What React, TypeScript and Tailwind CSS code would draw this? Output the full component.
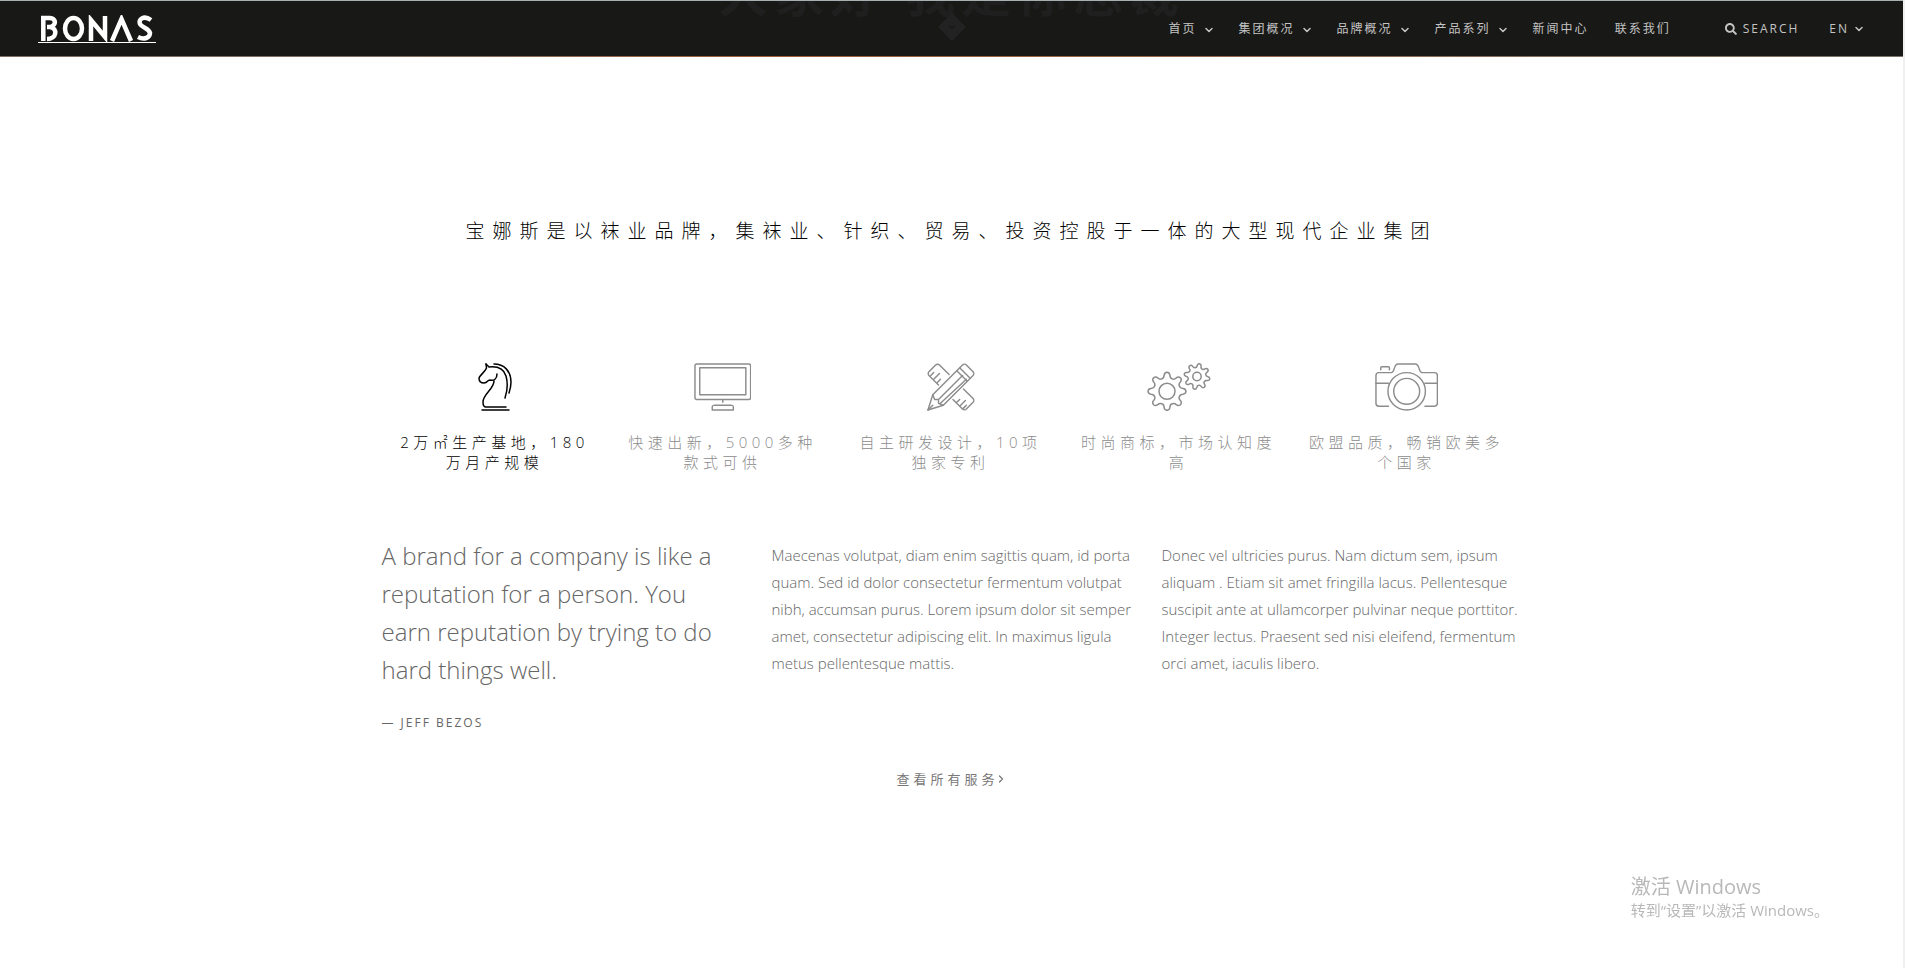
import { ChevronDown, ChevronRight } from 'lucide-react';
import { FaSearch } from 'react-icons/fa';

const fontCls = "font-['Open_Sans','Noto_Sans_CJK_SC',sans-serif]";

const menu = [
  { label: '首页', sub: true },
  { label: '集团概况', sub: true },
  { label: '品牌概况', sub: true },
  { label: '产品系列', sub: true },
  { label: '新闻中心', sub: false },
  { label: '联系我们', sub: false },
];

const iconProps = {
  className: 'h-12 w-auto',
  fill: 'none',
  stroke: 'currentColor',
  strokeWidth: 1.5,
  strokeLinecap: 'round' as const,
  strokeLinejoin: 'round' as const,
};

function KnightIcon() {
  return (
    <svg {...iconProps} viewBox="0 0 34 48">
      <path d="M8 1l.5 4C7 9 2 12 1 15c0 3 1 5 5 5 4 0 3-3 6-3 4 1 7-1 7-6" />
      <path d="M8 1l3 3c10-1 15 2 17 9 2 7 1 16-1 22" />
      <path d="M16 1c10 0 17 7 17 18 0 5-1 8-2 11" />
      <path d="M16 18c0 8-11 13-11 21 0 3 1 5 3 5h20M4 47h27" />
    </svg>
  );
}

function MonitorIcon() {
  return (
    <svg {...iconProps} viewBox="0 0 60 50">
      <rect x="1" y="1" width="58" height="37" rx="2" />
      <rect x="6" y="5" width="48" height="28" />
      <path d="M30 38v3M19 49v-3c0-2 1-2 3-2h16c2 0 3 0 3 2v3z" />
    </svg>
  );
}

function ToolsIcon() {
  return (
    <svg {...iconProps} viewBox="0 0 50 50">
      <path d="M1 49l5-16L37 2c1-1 3-1 4 0l7 7c1 1 1 3 0 4L17 44z" />
      <path d="M31 8l11 11M34 5l11 11M6 33l2 5h4v4l5 2M12 38L37 13M14 42L41 17M1 49l5-5" />
      <path d="M12 23L2 13c-1-1-1-3 0-4l7-7c1-1 3-1 4 0l10 10M4 13l3-3M7 17l6-6M11 20l3-3" />
      <path d="M38 27l10 10c1 1 1 3 0 4l-7 7c-1 1-3 1-4 0L27 38M31 41l3-3M34 45l6-6M38 47l3-3" />
    </svg>
  );
}

// cog outline with eight rounded teeth
function cog(cx: number, cy: number, outer: number, inner: number, turn: number) {
  const at = (a: number, r: number) => `${(cx + r * Math.cos(a)).toFixed(2)} ${(cy + r * Math.sin(a)).toFixed(2)}`;
  const mid = (outer + inner) / 2;
  let d = `M${at(turn - Math.PI / 8, inner)}`;
  for (let i = 0; i < 8; i++) {
    const a = turn + (i * Math.PI) / 4;
    d += `Q${at(a - 0.22, inner)} ${at(a - 0.18, mid)}`;
    d += `Q${at(a - 0.14, outer)} ${at(a, outer)}`;
    d += `Q${at(a + 0.14, outer)} ${at(a + 0.18, mid)}`;
    d += `Q${at(a + 0.22, inner)} ${at(a + Math.PI / 8, inner)}`;
  }
  return `${d}Z`;
}

function CogsIcon() {
  return (
    <svg {...iconProps} viewBox="0 0 64 48">
      <path d={cog(20, 28.3, 19, 13.5, 0)} />
      <circle cx="20" cy="28.3" r="8" />
      <path d={cog(50, 13.5, 13, 9, 0.2)} />
      <circle cx="50" cy="13.5" r="4.2" />
    </svg>
  );
}

function CameraIcon() {
  return (
    <svg {...iconProps} viewBox="0 0 66 50">
      <path d="M14 45H4c-2 0-3-1-3-3V13c0-2 1-3 3-3h13c4 0 2-9 7-9h18c5 0 3 9 7 9h13c2 0 3 1 3 3v29c0 2-1 3-3 3H52" />
      <path d="M6 7V5c0-1 0-1 1-1h7c1 0 1 0 1 1v2M1 21h13M52 21h13" />
      <circle cx="33" cy="29.5" r="19.5" />
      <circle cx="33" cy="29.5" r="13.5" />
    </svg>
  );
}

const services = [
  { title: '2万㎡生产基地，180万月产规模', Icon: KnightIcon, active: true },
  { title: '快速出新，5000多种款式可供', Icon: MonitorIcon, active: false },
  { title: '自主研发设计，10项独家专利', Icon: ToolsIcon, active: false },
  { title: '时尚商标，市场认知度高', Icon: CogsIcon, active: false },
  { title: '欧盟品质，畅销欧美多个国家', Icon: CameraIcon, active: false },
];

function Logo() {
  return (
    <svg width="118" height="27" viewBox="0 0 118 27" fill="none" stroke="#fff" strokeWidth="4.5" role="img" aria-label="BONAS">
      <path d="M5.3 26V1M3 3h9c6 0 7 7 0 9M9 12h3c8 1 7 12-3 12" />
      <ellipse cx="35.5" cy="13.5" rx="8.5" ry="10.5" />
      <path d="M53 26V5l14 17V1" />
      <path d="M74 26l9.5-22L93 26" />
      <path d="M113 5c-7-5-13-1-11 4 2 4 9 4 10 9 0 5-6 7-12 4" />
    </svg>
  );
}

function Header() {
  return (
    <header className="relative overflow-hidden border-t border-t-[#a8afb0] bg-[#181816]">
      {/* hero caption showing faintly through the bar */}
      <div className="pointer-events-none absolute inset-x-0 -top-10 text-center text-[50px] leading-[64px] font-bold tracking-[6px] text-[#1f1f1f]">
        大家好 我是你总裁
      </div>
      <div className="pointer-events-none absolute top-4 left-1/2 flex size-5 -translate-x-1/2 rotate-45 items-center justify-center bg-[#222]">
        <ChevronDown className="size-3 -rotate-45 text-[#111]" />
      </div>
      <div className="relative flex h-[55px] items-center justify-between px-[38px] text-xs tracking-[2px] text-[#c4c4c4]">
        <a href="#" className="border-b border-white">
          <Logo />
        </a>
        <nav className="flex items-center gap-[26px]">
          {menu.map((m) => (
            <a key={m.label} href="#" className="flex items-center">
              {m.label}
              {m.sub && <ChevronDown className="mt-0.5 -mr-0.5 ml-1.5 size-3" strokeWidth={3} />}
            </a>
          ))}
          <button type="button" className="ml-7 flex items-center gap-1.5 tracking-[2px]">
            <FaSearch className="size-3" />
            SEARCH
          </button>
          <button type="button" className="ml-1 flex items-center gap-1 tracking-[2px]">
            EN
            <ChevronDown className="size-3" strokeWidth={3} />
          </button>
        </nav>
      </div>
      <div className="h-px bg-linear-to-r from-[#7d7064] from-20% via-[#a05f3a] via-40% to-[#7a7468]" />
    </header>
  );
}

export default function App() {
  return (
    <div className={`min-h-screen border-r-2 border-[#f0f0f0] bg-white ${fontCls}`}>
      <Header />
      <main className="mx-auto max-w-[1170px] pt-[161px]">
        <h2 className="text-center text-[19px] leading-[27px] font-light tracking-[8px] text-black">
          宝娜斯是以袜业品牌，集袜业、针织、贸易、投资控股于一体的大型现代企业集团
        </h2>
        <div className="mt-[118px] grid grid-cols-5 pr-4 pl-[14px]">
          {services.map(({ title, Icon, active }) => (
            <a
              key={title}
              href="#"
              className={`flex flex-col items-center px-[15px] ${active ? 'text-black' : 'text-[#8c8c8c]'}`}
            >
              <Icon />
              <span className="mt-[21px] text-center text-[15px] leading-5 font-light tracking-[0.3em]">{title}</span>
            </a>
          ))}
        </div>
        <div className="mt-[65px] grid grid-cols-3 font-light text-[#666]">
          <blockquote className="px-[15px]">
            <p className="text-2xl leading-[38px]">
              A brand for a company is like a reputation for a person. You earn reputation by trying to do hard things
              well.
            </p>
            <footer className="mt-6 text-xs leading-5 font-normal tracking-[2px] uppercase">— Jeff Bezos</footer>
          </blockquote>
          <p className="px-[15px] pt-[5px] text-[15px] leading-[27px]">
            Maecenas volutpat, diam enim sagittis quam, id porta quam. Sed id dolor consectetur fermentum volutpat
            nibh, accumsan purus. Lorem ipsum dolor sit semper amet, consectetur adipiscing elit. In maximus ligula
            metus pellentesque mattis.
          </p>
          <p className="px-[15px] pt-[5px] text-[15px] leading-[27px]">
            Donec vel ultricies purus. Nam dictum sem, ipsum aliquam . Etiam sit amet fringilla lacus. Pellentesque
            suscipit ante at ullamcorper pulvinar neque porttitor. Integer lectus. Praesent sed nisi eleifend,
            fermentum orci amet, iaculis libero.
          </p>
        </div>
        <div className="mt-9 flex justify-center">
          <a href="#" className="flex items-center text-[13px] leading-5 tracking-[4px] text-[#777]">
            查看所有服务
            <ChevronRight className="-ml-1 size-3" strokeWidth={2.5} />
          </a>
        </div>
      </main>
      <aside className="fixed right-[76px] bottom-12 text-[#b8b8b8]">
        <p className="text-xl leading-[27px]">激活 Windows</p>
        <p className="text-[15px] leading-5">转到“设置”以激活 Windows。</p>
      </aside>
    </div>
  );
}
